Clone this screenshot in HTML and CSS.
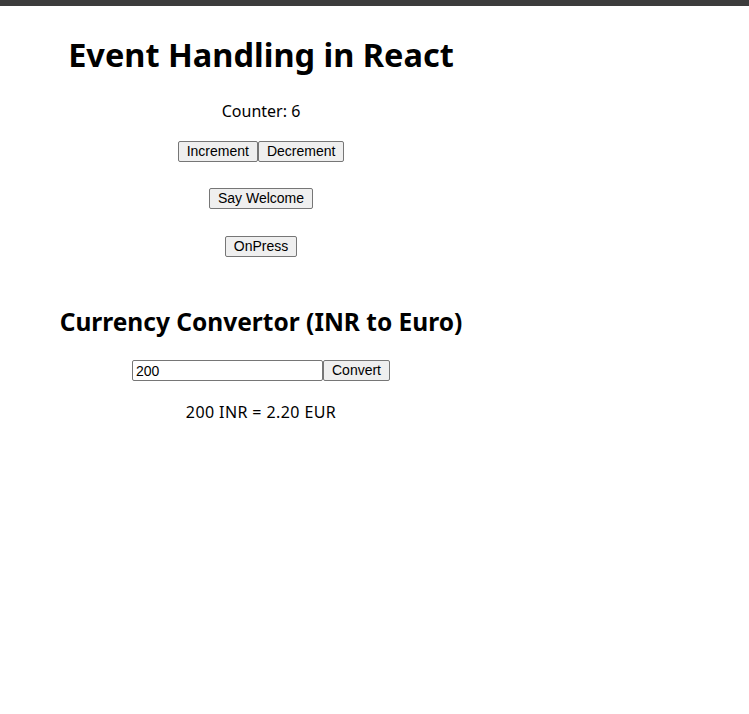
FILE: index.html
```html
<!DOCTYPE html>
<html>
<head>
<meta charset="utf-8">
<link rel="stylesheet" href="styles.css">
</head>
<body>
<div class="topbar"></div>
<div class="app">
  <h1 class="title">Event Handling in React</h1>
  <p class="text counter">Counter: 6</p>
  <div class="row row-counter"><button class="btn">Increment</button><button class="btn">Decrement</button></div>
  <div class="row row-welcome"><button class="btn">Say Welcome</button></div>
  <div class="row row-press"><button class="btn">OnPress</button></div>
  <h2 class="subtitle">Currency Convertor (INR to Euro)</h2>
  <div class="row row-convert"><input class="field" type="text" value="200"><button class="btn">Convert</button></div>
  <p class="text result">200 INR = 2.20 EUR</p>
</div>
</body>
</html>
```
FILE: styles.css
```css
html, body {
  margin: 0;
  padding: 0;
  background: #ffffff;
}
body {
  font-family: "Noto Sans", "Open Sans", sans-serif;
  color: #000;
}
.topbar {
  height: 6px;
  background: #3c3c3c;
}
.app {
  width: 506px;
  margin-left: 8px;
  text-align: center;
}
.title {
  font-size: 32.5px;
  font-weight: 700;
  line-height: 44px;
  margin: 27px 0 0;
}
.text {
  font-size: 16px;
  line-height: 22px;
  margin: 0;
}
.counter {
  margin-top: 23px;
}
.row {
  display: flex;
  justify-content: center;
}
.row-counter { margin-top: 19px; }
.row-welcome { margin-top: 26px; }
.row-press { margin-top: 27px; }
.btn {
  font-family: "Liberation Sans", Arial, sans-serif;
  font-size: 14px;
  height: 21px;
  box-sizing: border-box;
  padding: 1px 8px;
  background: #efefef;
  border: 1px solid #767676;
  border-radius: 2px;
  color: #000;
  line-height: 17px;
}
.subtitle {
  font-size: 24.5px;
  font-weight: 700;
  line-height: 33px;
  margin: 48px 0 0;
}
.row-convert { margin-top: 22px; }
.field {
  width: 191px;
  height: 21px;
  box-sizing: border-box;
  border: 1px solid #767676;
  border-radius: 2px;
  padding: 1px 3px;
  font-family: "Liberation Sans", Arial, sans-serif;
  font-size: 14px;
  margin: 0;
}
.result {
  margin-top: 20px;
  letter-spacing: 0.4px;
}
```
